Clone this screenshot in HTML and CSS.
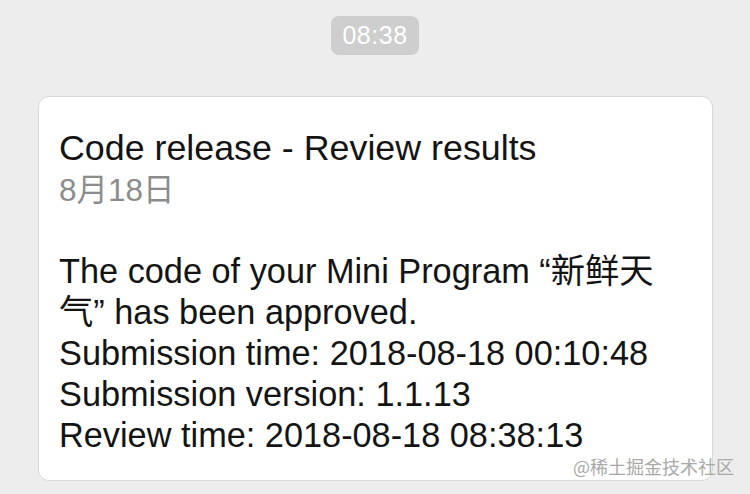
FILE: index.html
```html
<!DOCTYPE html>
<html lang="en">
<head>
<meta charset="utf-8">
<title>Review results</title>
<link rel="stylesheet" href="styles.css">
</head>
<body>
<div class="page">
  <div class="time-row"><span class="time">08:38</span></div>
  <div class="card">
    <div class="title">Code release - Review results</div>
    <div class="date">8月18日</div>
    <div class="content">
      <div class="line">The code of your Mini Program “新鲜天<br>气” has been approved.</div>
      <div class="line">Submission time: 2018-08-18 00:10:48</div>
      <div class="line">Submission version: 1.1.13</div>
      <div class="line">Review time: 2018-08-18 08:38:13</div>
    </div>
  </div>
  <div class="watermark">@稀土掘金技术社区</div>
</div>
</body>
</html>
```

FILE: styles.css
```css
html, body {
  margin: 0;
  padding: 0;
  background: #ededed;
}
.page {
  position: relative;
  width: 750px;
  height: 494px;
  overflow: hidden;
  font-family: "Liberation Sans", "Noto Sans CJK SC", sans-serif;
  padding-top: 16px;
  box-sizing: border-box;
}
.time-row {
  display: flex;
  justify-content: center;
}
.time {
  display: block;
  width: 88px;
  height: 39px;
  line-height: 39px;
  text-align: center;
  background: #cecece;
  color: #fff;
  border-radius: 8px;
  font-size: 25px;
  letter-spacing: 0.5px;
}
.card {
  margin: 41px 0 0 38px;
  width: 675px;
  height: 385px;
  box-sizing: border-box;
  background: #fff;
  border: 1px solid #d8d8d8;
  border-radius: 11px;
  padding: 30px 20px 0 20px;
}
.title {
  font-size: 35.8px;
  line-height: 42px;
  color: #141414;
}
.date {
  margin-top: 2px;
  font-size: 31.5px;
  line-height: 38px;
  color: #8c8c8c;
}
.content {
  margin-top: 42px;
  font-size: 34.3px;
  line-height: 41px;
  color: #141414;
}
.watermark {
  position: absolute;
  left: 573px;
  top: 453px;
  font-size: 18px;
  line-height: 26px;
  color: #a9a9a9;
  font-family: "Noto Sans CJK SC", "Liberation Sans", sans-serif;
}
```
